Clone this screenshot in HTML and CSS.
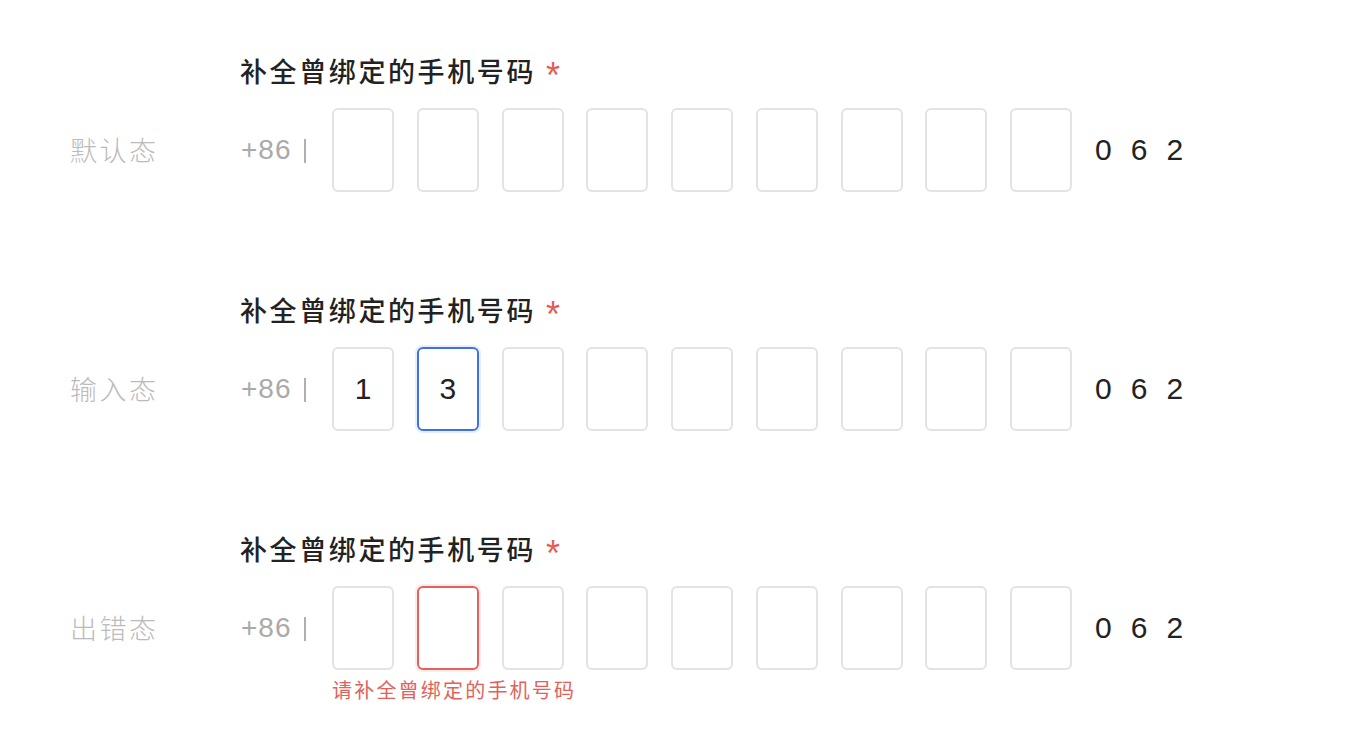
FILE: index.html
```html
<!DOCTYPE html>
<html lang="zh">
<head>
<meta charset="utf-8">
<link rel="stylesheet" href="styles.css">
</head>
<body>
<div class="page">
  <section class="row">
    <div class="state">默认态</div>
    <div class="field">
      <div class="title">补全曾绑定的手机号码<span class="req">*</span></div>
      <div class="inputs">
        <span class="prefix">+86</span><span class="bar"></span>
        <div class="boxes">
          <div class="box"></div><div class="box"></div><div class="box"></div>
          <div class="box"></div><div class="box"></div><div class="box"></div>
          <div class="box"></div><div class="box"></div><div class="box"></div>
        </div>
        <div class="tail"><span>0</span><span>6</span><span>2</span></div>
      </div>
    </div>
  </section>
  <section class="row">
    <div class="state">输入态</div>
    <div class="field">
      <div class="title">补全曾绑定的手机号码<span class="req">*</span></div>
      <div class="inputs">
        <span class="prefix">+86</span><span class="bar"></span>
        <div class="boxes">
          <div class="box">1</div><div class="box focus">3</div><div class="box"></div>
          <div class="box"></div><div class="box"></div><div class="box"></div>
          <div class="box"></div><div class="box"></div><div class="box"></div>
        </div>
        <div class="tail"><span>0</span><span>6</span><span>2</span></div>
      </div>
    </div>
  </section>
  <section class="row">
    <div class="state">出错态</div>
    <div class="field">
      <div class="title">补全曾绑定的手机号码<span class="req">*</span></div>
      <div class="inputs">
        <span class="prefix">+86</span><span class="bar"></span>
        <div class="boxes">
          <div class="box"></div><div class="box error"></div><div class="box"></div>
          <div class="box"></div><div class="box"></div><div class="box"></div>
          <div class="box"></div><div class="box"></div><div class="box"></div>
        </div>
        <div class="tail"><span>0</span><span>6</span><span>2</span></div>
      </div>
      <div class="errmsg">请补全曾绑定的手机号码</div>
    </div>
  </section>
</div>
</body>
</html>
```

FILE: styles.css
```css
html, body {
  margin: 0;
  padding: 0;
  background: #ffffff;
}
body {
  font-family: "Liberation Sans", "Noto Sans CJK SC", sans-serif;
  color: #222;
}
.page {
  padding-top: 53px;
}
.row {
  display: flex;
  align-items: flex-start;
  height: 239px;
}
.state {
  width: 170px;
  padding-left: 70px;
  box-sizing: content-box;
  margin-top: 55px;
  line-height: 84px;
  font-size: 27px;
  letter-spacing: 2.5px;
  color: #bbbbbb;
  font-family: "Noto Sans CJK SC", sans-serif;
  font-weight: 300;
}
.field {
  display: flex;
  flex-direction: column;
}
.title {
  font-family: "Noto Sans CJK SC", sans-serif;
  font-size: 27px;
  font-weight: 500;
  line-height: 36px;
  letter-spacing: 2.6px;
  color: #222;
  height: 36px;
  white-space: nowrap;
}
.req {
  color: #e35d55;
  margin-left: 10px;
  font-family: "Liberation Sans", sans-serif;
  font-weight: 400;
  font-size: 36px;
  line-height: 0;
  vertical-align: -6px;
}
.inputs {
  display: flex;
  align-items: center;
  margin-top: 19px;
  height: 84px;
}
.prefix {
  font-size: 28px;
  color: #aaaaaa;
  width: 56px;
  letter-spacing: 1px;
  margin-left: 1px;
}
.bar {
  width: 2px;
  height: 24px;
  background: #b0b0b0;
  margin-left: 7px;
  margin-right: 26px;
  margin-top: 2px;
}
.boxes {
  display: flex;
  gap: 22.75px;
}
.box {
  width: 62px;
  height: 84px;
  box-sizing: border-box;
  border: 2px solid #e3e3e3;
  border-radius: 6px;
  display: flex;
  align-items: center;
  justify-content: center;
  font-size: 30px;
  color: #222;
}
.box.focus {
  border-color: #3e73de;
  box-shadow: 0 0 0 2px rgba(62, 115, 222, 0.12);
}
.box.error {
  border-color: #e2625b;
  box-shadow: 0 0 0 2px rgba(226, 98, 91, 0.12);
}
.tail {
  display: flex;
  gap: 19px;
  margin-left: 23px;
  font-size: 30px;
  color: #222;
}
.errmsg {
  margin-top: 6px;
  margin-left: 92px;
  font-family: "Noto Sans CJK SC", sans-serif;
  font-size: 20px;
  line-height: 28px;
  letter-spacing: 2.2px;
  color: #e2625b;
}
```
